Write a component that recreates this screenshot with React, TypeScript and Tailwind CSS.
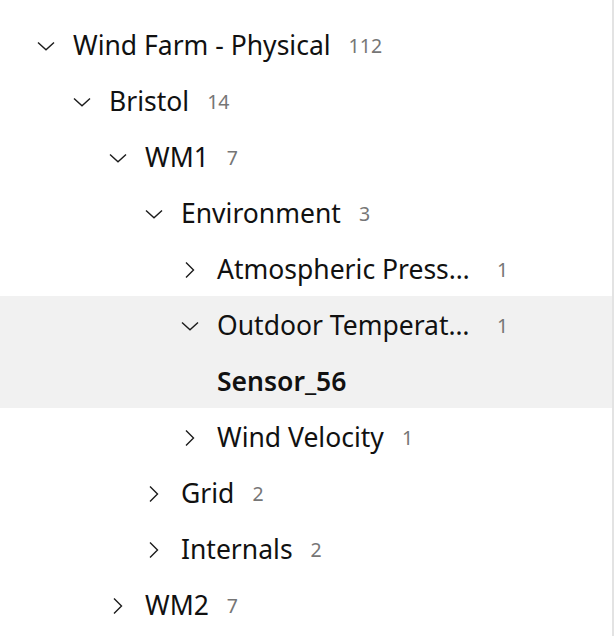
import React from "react";

type Node = {
  label: string;
  count?: number;
  level: number;
  state: "open" | "closed" | "leaf";
  selected?: boolean;
  bold?: boolean;
  fixed?: boolean;
};

const rows: Node[] = [
  { label: "Wind Farm - Physical", count: 112, level: 0, state: "open" },
  { label: "Bristol", count: 14, level: 1, state: "open" },
  { label: "WM1", count: 7, level: 2, state: "open" },
  { label: "Environment", count: 3, level: 3, state: "open" },
  { label: "Atmospheric Press…", count: 1, level: 4, state: "closed", fixed: true },
  { label: "Outdoor Temperat…", count: 1, level: 4, state: "open", selected: true, fixed: true },
  { label: "Sensor_56", level: 5, state: "leaf", selected: true, bold: true },
  { label: "Wind Velocity", count: 1, level: 4, state: "closed" },
  { label: "Grid", count: 2, level: 3, state: "closed" },
  { label: "Internals", count: 2, level: 3, state: "closed" },
  { label: "WM2", count: 7, level: 2, state: "closed" },
];

function ChevronDown() {
  return (
    <svg width="18" height="10" viewBox="0 0 18 10" className="block">
      <path d="M1 1.5 L9 8.8 L17 1.5" fill="none" stroke="#1b1b1b" strokeWidth="1.4" />
    </svg>
  );
}

function ChevronRight() {
  return (
    <svg width="10" height="18" viewBox="0 0 10 18" className="block">
      <path d="M1 1.5 L8.5 9 L1 16.5" fill="none" stroke="#1b1b1b" strokeWidth="1.4" />
    </svg>
  );
}

export default function App() {
  return (
    <div className="w-[616px] h-[636px] bg-white overflow-hidden" style={{ fontFamily: '"Noto Sans", "Open Sans", sans-serif' }}>
      <div className="w-[614px] h-[636px] border-r-2 border-[#e3e3e3] pt-4">
        {rows.map((r, i) => (
          <div
            key={i}
            className={`flex items-center h-14 pt-[4px] ${r.selected ? "bg-[#f1f1f1]" : ""}`}
            style={{ paddingLeft: 37 + 36 * r.level }}
          >
            {r.state !== "leaf" && (
              <div className="w-9 shrink-0 flex items-center">
                {r.state === "open" ? <ChevronDown /> : <div className="pl-[4px]"><ChevronRight /></div>}
              </div>
            )}
            <span
              className={`text-[26.5px] leading-none text-[#111] whitespace-nowrap pb-[2px] ${r.bold ? "font-semibold" : ""} ${r.fixed ? "w-[262px]" : ""}`}
            >
              {r.label}
            </span>
            {r.count !== undefined && (
              <span className="ml-[18px] text-[19.5px] leading-none text-[#767676]">{r.count}</span>
            )}
          </div>
        ))}
      </div>
    </div>
  );
}
